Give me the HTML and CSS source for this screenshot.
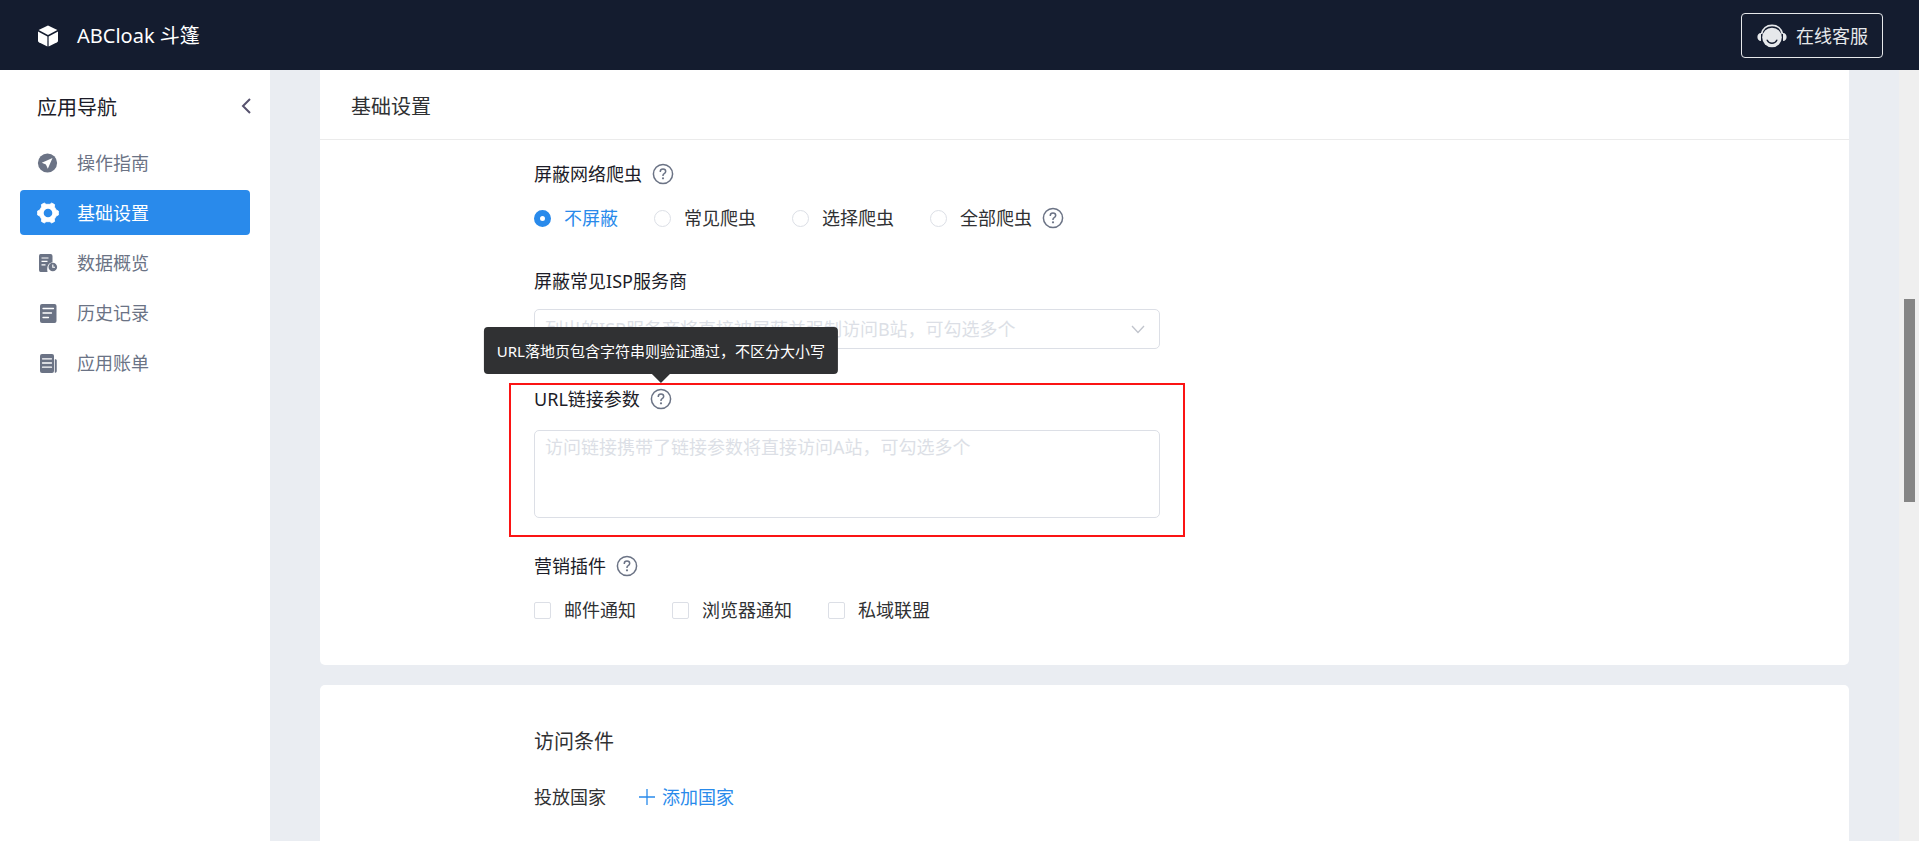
FILE: index.html
```html
<!DOCTYPE html>
<html lang="zh-CN">
<head>
<meta charset="utf-8">
<meta name="viewport" content="width=device-width, initial-scale=1">
<title>ABCloak 斗篷</title>
<link rel="stylesheet" href="styles.css">
</head>
<body>
<svg class="sprite" aria-hidden="true">
  <symbol id="help" viewBox="0 0 22 22">
    <circle cx="11" cy="11" r="9.6" fill="none" stroke="currentColor" stroke-width="1.5"/>
    <path d="M8.3 8.9V8.4C8.3 7 9.4 6 11 6s2.7 1 2.7 2.4c0 1.1-.6 1.7-1.5 2.3-.8.5-1.2 1-1.2 1.9v.4" fill="none" stroke="currentColor" stroke-width="1.5"/>
    <circle cx="11" cy="15.3" r="1.1" fill="currentColor"/>
  </symbol>
</svg>

<header class="topbar">
  <svg class="icon" viewBox="0 0 22 22" aria-hidden="true">
    <path d="M11 .4 20.4 5.1 11 10 1.6 5.1z" fill="#fff"/>
    <path d="M1 6.6l9.4 4.9v10L1.900 17.200Q1 16.700 1 15.700z" fill="#fff"/>
    <path d="M21 6.600l-9.400 4.900v10l8.500-4.300q.900-.500.900-1.500z" fill="#fff"/>
  </svg>
  <span class="brand">ABCloak 斗篷</span>
  <button class="service" type="button">
    <svg class="service-icon" viewBox="0 0 30 24" aria-hidden="true">
      <path d="M4.500 10C5.500 4.500 9.700 1.300 15 1.300S24.500 4.500 25.500 10" fill="none" stroke="#e6e8eb" stroke-width="1.800"/>
      <circle cx="15" cy="13.500" r="9.800" fill="#e6e8eb"/>
      <path d="M4 9v8C1.600 17 .4 15.300.4 13S1.600 9 4 9zM26 9v8c2.400 0 3.600-1.700 3.600-4S28.400 9 26 9z" fill="#e6e8eb"/>
      <path d="M10.200 16.200c1 2 2.700 3 4.800 3s3.800-1 4.800-3" fill="none" stroke="#141c2f" stroke-width="1.400" stroke-linecap="round"/>
    </svg>
    在线客服
  </button>
</header>

<div class="layout">
  <aside class="sidebar">
    <div class="sidebar-head">
      <h2 class="title">应用导航</h2>
      <button class="collapse" type="button" aria-label="收起">
        <svg viewBox="0 0 10 16" aria-hidden="true"><path d="M9 1 2 8l7 7" fill="none" stroke="#57526e" stroke-width="2"/></svg>
      </button>
    </div>
    <nav class="nav">
      <a class="nav-item" href="#guide">
        <svg class="icon" viewBox="0 0 22 22" aria-hidden="true"><circle cx="10.500" cy="11" r="9.600" fill="#6b7385"/><path d="M15.500 6 4.800 10.800l4.100 1.600 1.900 4.300z" fill="#fff"/></svg>
        操作指南
      </a>
      <a class="nav-item active" href="#basic" aria-current="page">
        <svg class="icon" viewBox="0 0 22 22" aria-hidden="true">
          <path d="M7.300 1 9 2.300h4L14.700 1l2.900 1.600-.2 2.300 1.800 3.100 2.200 1v4l-2.200 1-1.800 3.100.2 2.300-2.900 1.600L13 19.700H9L7.300 21l-2.900-1.600.2-2.300L2.800 14l-2.200-1V9l2.200-1 1.800-3.100-.2-2.300z" fill="#fff" stroke="#fff" stroke-linejoin="round" stroke-width=".8"/>
          <circle cx="11" cy="11" r="4.300" fill="#298aeb"/>
        </svg>
        基础设置
      </a>
      <a class="nav-item" href="#data">
        <svg class="icon" viewBox="0 0 22 22" aria-hidden="true">
          <path d="M3.500 2h10Q15.500 2 15.500 4v6.200C11.500 11 9.500 14 10.500 20h-7Q2 20 2 18V4Q2 2 3.500 2z" fill="#6b7385"/>
          <path d="M4.500 6h7M4.500 9.400h6M4.500 12.800h4" stroke="#fff" stroke-width="1.200"/>
          <circle cx="15.800" cy="15" r="4.300" fill="#6b7385"/>
          <path d="M15.800 12.500V15.300H18" fill="none" stroke="#fff" stroke-width="1.100"/>
        </svg>
        数据概览
      </a>
      <a class="nav-item" href="#history">
        <svg class="icon" viewBox="0 0 22 22" aria-hidden="true">
          <rect x="3" y="2" width="16.500" height="19" rx="2" fill="#6b7385"/>
          <path d="M6 6.500h10.500M6 11h8.500M6 15.500h5.500" stroke="#fff" stroke-width="1.300" stroke-linecap="round"/>
        </svg>
        历史记录
      </a>
      <a class="nav-item" href="#bill">
        <svg class="icon" viewBox="0 0 22 22" aria-hidden="true">
          <rect x="3" y="2" width="14" height="19" rx="2" fill="#6b7385"/>
          <path d="M5.500 6.800h9M5.500 11h9M5.500 15.200h9" stroke="#fff" stroke-width="1.300" stroke-linecap="round"/>
          <path d="M18 7.500h.5q1 0 1 1v10.500q0 1.500-1.500 1.500z" fill="#6b7385" stroke="#6b7385" stroke-width=".5"/>
        </svg>
        应用账单
      </a>
    </nav>
  </aside>

  <main class="content">
    <section class="card card-first">
      <header class="card-head"><h1 class="title">基础设置</h1></header>
      <form class="form">
        <fieldset class="field">
          <legend class="legend">屏蔽网络爬虫
            <button class="help" type="button" aria-label="帮助"><svg><use href="#help"/></svg></button>
          </legend>
          <div class="choices">
            <label class="choice"><input class="radio" type="radio" name="spider" checked><span>不屏蔽</span></label>
            <label class="choice"><input class="radio" type="radio" name="spider"><span>常见爬虫</span></label>
            <label class="choice"><input class="radio" type="radio" name="spider"><span>选择爬虫</span></label>
            <div class="choice-help">
              <label class="choice"><input class="radio" type="radio" name="spider"><span>全部爬虫</span></label>
              <button class="help" type="button" aria-label="帮助"><svg><use href="#help"/></svg></button>
            </div>
          </div>
        </fieldset>

        <div class="field">
          <label class="legend" for="isp">屏蔽常见ISP服务商</label>
          <div class="select-wrap">
            <select class="control select" id="isp">
              <option>列出的ISP服务商将直接被屏蔽并强制访问B站，可勾选多个</option>
            </select>
            <svg class="arrow" viewBox="0 0 14 9" aria-hidden="true"><path d="M1 1l6 6.500L13 1" fill="none" stroke="#c0c4cc" stroke-width="1.300"/></svg>
          </div>
        </div>

        <div class="field highlighted">
          <div class="legend">
            <label for="params">URL链接参数</label>
            <button class="help" type="button" aria-describedby="tip" aria-label="帮助">
              <svg><use href="#help"/></svg>
              <span class="tooltip" id="tip" role="tooltip">URL落地页包含字符串则验证通过，不区分大小写</span>
            </button>
          </div>
          <textarea class="control textarea" id="params" placeholder="访问链接携带了链接参数将直接访问A站，可勾选多个"></textarea>
        </div>

        <fieldset class="field">
          <legend class="legend">营销插件
            <button class="help" type="button" aria-label="帮助"><svg><use href="#help"/></svg></button>
          </legend>
          <div class="choices">
            <label class="choice"><input class="checkbox" type="checkbox"><span>邮件通知</span></label>
            <label class="choice"><input class="checkbox" type="checkbox"><span>浏览器通知</span></label>
            <label class="choice"><input class="checkbox" type="checkbox"><span>私域联盟</span></label>
          </div>
        </fieldset>
      </form>
    </section>

    <section class="card conditions">
      <h2 class="title">访问条件</h2>
      <div class="country">
        <span>投放国家</span>
        <button class="add" type="button">
          <svg viewBox="0 0 18 18" aria-hidden="true"><path d="M9 1v16M1 9h16" stroke="currentColor" stroke-width="1.300"/></svg>
          添加国家
        </button>
      </div>
    </section>
  </main>

  <div class="scroll-track" aria-hidden="true"><div class="scroll-thumb"></div></div>
</div>
</body>
</html>
```
FILE: styles.css
```css
* {
  box-sizing: border-box;
}

body {
  display: flex;
  flex-direction: column;
  height: 100vh;
  margin: 0;
  overflow: hidden;
  color: #303133;
  font-family: "Noto Sans", "Noto Sans CJK SC", sans-serif;
  font-size: 18px;
  font-weight: 400;
  line-height: 24px;
}

button,
input,
select,
textarea {
  margin: 0;
  font: inherit;
}

button {
  padding: 0;
  border: 0;
  background: none;
  color: inherit;
}

svg {
  display: block;
  flex: none;
}

.sprite {
  position: absolute;
  width: 0;
  height: 0;
}

.icon {
  width: 22px;
  height: 22px;
}

.title {
  margin: 0;
  font-size: 20px;
  font-weight: 400;
  line-height: 28px;
}

/* Top bar */
.topbar {
  display: flex;
  flex: none;
  align-items: center;
  gap: 18px;
  height: 70px;
  padding: 1px 36px 0 37px;
  background: #141c2f;
  color: #fff;
}

.brand {
  font-size: 20px;
}

.service {
  display: flex;
  align-items: center;
  gap: 9px;
  height: 45px;
  margin-left: auto;
  padding: 0 14px 0 15px;
  border: 1px solid #e6e8eb;
  border-radius: 4px;
  color: #e6e8eb;
}

.service-icon {
  width: 30px;
  height: 24px;
}

/* Page columns */
.layout {
  display: flex;
  flex: 1;
  min-height: 0;
}

.sidebar {
  flex: none;
  width: 270px;
  padding: 24px 19px 24px 20px;
  background: #fff;
}

.sidebar-head {
  display: flex;
  align-items: flex-start;
  justify-content: space-between;
  padding-left: 17px;
  color: #1c1c28;
}

.collapse {
  padding-top: 4px;
}

.collapse svg {
  width: 10px;
  height: 16px;
}

.nav {
  display: flex;
  flex-direction: column;
  gap: 5px;
  padding: 18px 1px 0 0;
}

.nav-item {
  display: flex;
  align-items: center;
  gap: 18px;
  height: 45px;
  padding-left: 17px;
  border-radius: 4px;
  color: #6b7385;
  text-decoration: none;
}

.nav-item.active {
  background: #298aeb;
  color: #fff;
}

.content {
  flex: 1;
  min-width: 0;
  padding: 0 50px;
  overflow: hidden;
  background: #eaedf2;
}

.scroll-track {
  display: grid;
  flex: none;
  grid-template-rows: 229fr 203fr 339fr;
  width: 20px;
  padding: 0 4px 0 5px;
  background: #efefef;
}

.scroll-thumb {
  grid-row: 2;
  background: #858585;
}

/* Cards */
.card {
  border-radius: 5px;
  background: #fff;
}

.card-first {
  border-radius: 0 0 5px 5px;
}

.card-head {
  padding: 23px 31px 18px;
  border-bottom: 1px solid #ebebeb;
}

.form {
  width: 626px;
  max-width: 84%;
  margin-left: 14%;
  padding: 22px 0 43px;
}

.field {
  display: flex;
  flex-direction: column;
  gap: 16px;
  min-width: 0;
  margin: 0 0 34px;
  padding: 0;
  border: 0;
}

fieldset.field {
  margin-bottom: 39px;
}

.field:last-child {
  margin-bottom: 0;
}

.legend {
  display: flex;
  align-items: center;
  gap: 10px;
  height: 24px;
  padding: 0;
  color: #1c1c28;
}

fieldset .legend {
  margin-bottom: 20px;
}

.help {
  position: relative;
  color: #6b7385;
}

.help svg {
  width: 22px;
  height: 22px;
}

.choices {
  display: flex;
  gap: 36px;
}

.choice {
  display: flex;
  align-items: center;
  gap: 13px;
}

.choice-help {
  display: flex;
  align-items: center;
  gap: 10px;
}

.radio,
.checkbox {
  appearance: none;
  width: 17px;
  height: 17px;
  border: 1px solid #dcdfe6;
  background: #fff;
}

.radio {
  border-radius: 50%;
}

.checkbox {
  border-radius: 2px;
}

.radio:checked {
  border: 6px solid #298aeb;
}

.radio:checked + span {
  color: #298aeb;
}

.control {
  display: block;
  width: 100%;
  border: 1px solid #dcdfe6;
  border-radius: 5px;
  background: #fff;
  color: #dcdfe6;
}

.select-wrap {
  display: grid;
  align-items: center;
}

.select-wrap > * {
  grid-area: 1 / 1;
}

.select {
  appearance: none;
  height: 40px;
  padding: 0 40px 0 10px;
}

.arrow {
  justify-self: end;
  width: 14px;
  height: 9px;
  margin-right: 15px;
  pointer-events: none;
}

.textarea {
  height: 88px;
  padding: 4px 10px;
  resize: none;
}

.textarea::placeholder {
  color: #dcdfe6;
}

.highlighted {
  gap: 19px;
  margin: 0 -25px 17px;
  padding: 2px 23px 17px;
  border: 2px solid #fb1414;
}

.tooltip {
  position: absolute;
  bottom: calc(100% + 14px);
  left: 50%;
  padding: 12px 13px 11px;
  border-radius: 4px;
  transform: translateX(-50%);
  background: #303133;
  color: #fff;
  font-size: 15px;
  white-space: nowrap;
}

.tooltip::after {
  content: "";
  position: absolute;
  top: 100%;
  left: 50%;
  margin-left: -9px;
  border: 9px solid transparent;
  border-bottom: 0;
  border-top-color: #303133;
}

/* Visit conditions */
.conditions {
  height: 100%;
  margin-top: 20px;
  padding: 43px 0 0 14%;
}

.country {
  display: flex;
  gap: 32px;
  padding-top: 29px;
}

.add {
  display: flex;
  align-items: center;
  gap: 6px;
  color: #298aeb;
}

.add svg {
  width: 18px;
  height: 18px;
}
```
